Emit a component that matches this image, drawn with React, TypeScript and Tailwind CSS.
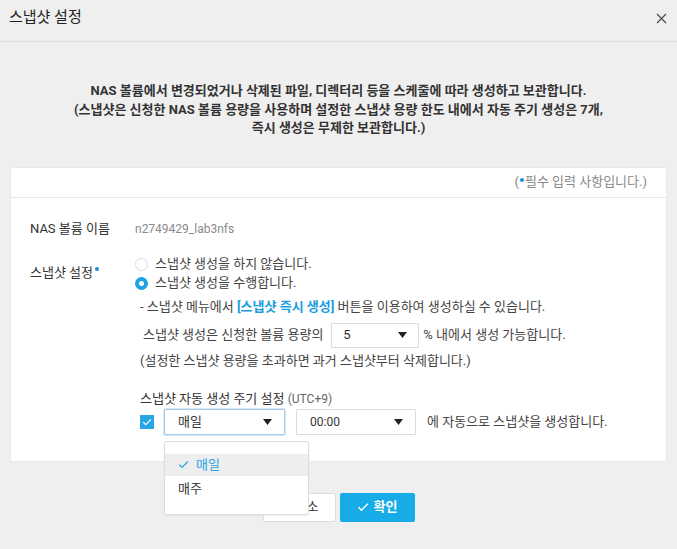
import { useState } from 'react';

const font = { fontFamily: 'Roboto, "Noto Sans CJK KR", sans-serif' };

function Caret() {
  return (
    <svg width="9" height="6" viewBox="0 0 9 6" className="shrink-0">
      <path d="M0 0h9L4.5 6z" fill="#222" />
    </svg>
  );
}

function Check({ color = '#fff', size = 10 }: { color?: string; size?: number }) {
  return (
    <svg width={size} height={size} viewBox="0 0 12 12" fill="none">
      <path d="M1.5 6.2l3 3L10.8 2.8" stroke={color} strokeWidth="1.4" />
    </svg>
  );
}

export default function App() {
  const [mode, setMode] = useState<'off' | 'on'>('on');

  return (
    <div style={font} className="w-[677px] h-[549px] bg-[#efefef] overflow-hidden text-[#333] text-[13px]">
      {/* header */}
      <div className="h-[42px] px-[9px] pt-[6px] border-b border-[#dedede] flex items-start justify-between">
        <h1 className="text-[15px] leading-[22px] text-[#222]">스냅샷 설정</h1>
        <button className="mt-[6px] mr-[1px] w-[12px] h-[12px] flex items-center justify-center">
          <svg width="11" height="11" viewBox="0 0 11 11">
            <path d="M1 1l9 9M10 1l-9 9" stroke="#444" strokeWidth="1.1" />
          </svg>
        </button>
      </div>

      {/* description */}
      <div className="mt-[40px] text-center font-bold text-[13px] leading-[18.5px] text-[#333]">
        <p>NAS 볼륨에서 변경되었거나 삭제된 파일, 디렉터리 등을 스케줄에 따라 생성하고 보관합니다.</p>
        <p>(스냅샷은 신청한 NAS 볼륨 용량을 사용하며 설정한 스냅샷 용량 한도 내에서 자동 주기 생성은 7개,</p>
        <p>즉시 생성은 무제한 보관합니다.)</p>
      </div>

      {/* card */}
      <div className="mx-[10px] mt-[29px] bg-white rounded-[3px] border border-[#e8e8e8]">
        <div className="h-[30px] border-b border-[#e6e6e6] flex items-center justify-end pr-[19px] text-[#888]">
          (<span className="w-[4px] h-[4px] rounded-full bg-[#1a8fdc] -mt-[5px] mx-[1px]" />필수 입력 사항입니다.)
        </div>

        <div className="px-[19px] pt-[22px] pb-[26px]">
          <div className="flex leading-[18px]">
            <div className="w-[105px] shrink-0">NAS 볼륨 이름</div>
            <div className="text-[#8a8a8a] text-[12px]">n2749429_lab3nfs</div>
          </div>

          <div className="flex mt-[17px]">
            <div className="w-[105px] shrink-0 pt-[9px] leading-[18px] flex items-start">
              스냅샷 설정
              <span className="w-[4px] h-[4px] rounded-full bg-[#1a8fdc] mt-[3px] ml-[2px]" />
            </div>
            <div className="flex-1 text-[#444]">
              <label className="flex items-center h-[19px] cursor-pointer" onClick={() => setMode('off')}>
                <span
                  className={
                    mode === 'off'
                      ? 'w-[13px] h-[13px] rounded-full border-[4px] border-[#1ba3e4] bg-white shrink-0'
                      : 'w-[13px] h-[13px] rounded-full border border-[#dcdcdc] bg-white shrink-0'
                  }
                />
                <span className="ml-[7px]">스냅샷 생성을 하지 않습니다.</span>
              </label>
              <label className="flex items-center h-[19px] cursor-pointer" onClick={() => setMode('on')}>
                <span
                  className={
                    mode === 'on'
                      ? 'w-[13px] h-[13px] rounded-full border-[4px] border-[#1ba3e4] bg-white shrink-0'
                      : 'w-[13px] h-[13px] rounded-full border border-[#dcdcdc] bg-white shrink-0'
                  }
                />
                <span className="ml-[7px]">스냅샷 생성을 수행합니다.</span>
              </label>

              <div className="pl-[5px] text-[#444]">
                <p className="mt-[5px] leading-[18px]">
                  - 스냅샷 메뉴에서 <b className="text-[#1a9de0]">[스냅샷 즉시 생성]</b> 버튼을 이용하여 생성하실 수 있습니다.
                </p>
                <div className="mt-[7px] flex items-center pl-[3px]">
                  <span>스냅샷 생성은 신청한 볼륨 용량의</span>
                  <div className="ml-[8px] w-[88px] h-[25px] border border-[#dcdcdc] flex items-center justify-between pl-[11px] pr-[11px] text-[#333]">
                    <span>5</span>
                    <Caret />
                  </div>
                  <span className="ml-[4px]">% 내에서 생성 가능합니다.</span>
                </div>
                <p className="mt-[4px] leading-[18px]">(설정한 스냅샷 용량을 초과하면 과거 스냅샷부터 삭제합니다.)</p>

                <p className="mt-[20px] leading-[18px] text-[#333]">
                  스냅샷 자동 생성 주기 설정 <span className="text-[#666] text-[12px]">(UTC+9)</span>
                </p>
                <div className="mt-[1px] flex items-center">
                  <span className="w-[14px] h-[14px] bg-[#27a6e6] flex items-center justify-center shrink-0">
                    <Check size={10} />
                  </span>
                  <div className="relative ml-[10px]">
                    <div className="w-[121px] h-[26px] border border-[#a8cbed] shadow-[0_0_0_1px_#d6e7f8] rounded-[1px] flex items-center justify-between pl-[13px] pr-[12px] text-[#333]">
                      <span>매일</span>
                      <Caret />
                    </div>
                    <div className="absolute left-0 top-[32px] w-[145px] bg-white border border-[#dddddd] rounded-[2px] shadow-[0_1px_2px_rgba(0,0,0,0.06)] pt-[12px] pb-[11px] z-10">
                      <div className="h-[22px] bg-[#eeeeee] flex items-center pl-[13px] text-[#29a3e2]">
                        <Check color="#29a3e2" size={11} />
                        <span className="ml-[7px]">매일</span>
                      </div>
                      <div className="h-[27px] flex items-center pl-[13px] text-[#333]">매주</div>
                    </div>
                  </div>
                  <div className="ml-[11px] w-[120px] h-[26px] border border-[#dcdcdc] rounded-[1px] flex items-center justify-between pl-[13px] pr-[12px] text-[#333] text-[12px]">
                    <span>00:00</span>
                    <Caret />
                  </div>
                  <span className="ml-[11px] text-[#444]">에 자동으로 스냅샷을 생성합니다.</span>
                </div>
              </div>
            </div>
          </div>
        </div>
      </div>

      {/* footer */}
      <div className="mt-[31px] flex justify-center gap-[4px]">
        <button className="w-[73px] h-[29px] bg-white border border-[#dddddd] rounded-[2px] text-[13px] text-[#333] flex items-center justify-center gap-[5px]">
          <svg width="10" height="10" viewBox="0 0 10 10">
            <path d="M1 1l8 8M9 1l-8 8" stroke="#333" strokeWidth="1.3" />
          </svg>
          취소
        </button>
        <button className="w-[75px] h-[29px] bg-[#17ace8] rounded-[2px] text-[13px] font-bold text-white flex items-center justify-center gap-[5px]">
          <Check size={12} />
          확인
        </button>
      </div>
    </div>
  );
}
